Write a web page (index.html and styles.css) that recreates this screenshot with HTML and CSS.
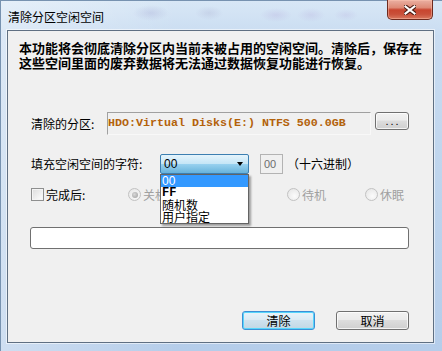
FILE: index.html
```html
<!DOCTYPE html>
<html>
<head>
<meta charset="utf-8">
<title>清除分区空闲空间</title>
<link rel="stylesheet" href="styles.css">
</head>
<body>
<div class="window">
  <div class="titlebar">
    <span class="title">清除分区空闲空间</span>
    <div class="close">
      <svg width="12" height="10" viewBox="0 0 12 10">
        <path d="M1.5 1.5 L10.5 8.5 M10.5 1.5 L1.5 8.5" stroke="#4b1b12" stroke-width="4.2" stroke-linecap="square"/>
        <path d="M1.5 1.5 L10.5 8.5 M10.5 1.5 L1.5 8.5" stroke="#ffffff" stroke-width="2.2" stroke-linecap="square"/>
      </svg>
    </div>
  </div>
  <div class="client">
    <p class="intro">本功能将会彻底清除分区内当前未被占用的空闲空间。清除后，保存在<br>这些空间里面的废弃数据将无法通过数据恢复功能进行恢复。</p>
    <div class="form">
      <div class="row row-part">
        <span class="label label-part">清除的分区:</span>
        <div class="readonly">HDO:Virtual Disks(E:) NTFS 500.0GB</div>
        <div class="btn browse">...</div>
      </div>
      <div class="row row-fill">
        <span class="label label-fill">填充空闲空间的字符:</span>
        <div class="combo">
          <span class="combo-value">00</span>
          <span class="arrow"></span>
          <ul class="dropdown">
            <li class="selected">00</li>
            <li class="latin">FF</li>
            <li>随机数</li>
            <li>用户指定</li>
          </ul>
        </div>
        <div class="hexbox">00</div>
        <span class="hexlabel">（十六进制）</span>
      </div>
      <div class="row row-after">
        <div class="group group-check">
          <span class="checkbox"></span>
          <span class="label">完成后:</span>
        </div>
        <div class="group group-off">
          <span class="radio checked"></span>
          <span class="label disabled">关机</span>
        </div>
        <div class="group group-standby">
          <span class="radio"></span>
          <span class="label disabled">待机</span>
        </div>
        <div class="group">
          <span class="radio"></span>
          <span class="label disabled">休眠</span>
        </div>
      </div>
      <div class="bar"></div>
      <div class="buttons">
        <div class="btn action primary">清除</div>
        <div class="btn action">取消</div>
      </div>
    </div>
  </div>
</div>
</body>
</html>
```

FILE: styles.css
```css
html, body {
  margin: 0;
  padding: 0;
}

body {
  width: 442px;
  height: 351px;
  overflow: hidden;
  font-family: "Noto Sans CJK SC", "Liberation Sans", sans-serif;
  font-size: 12px;
  color: #000;
  background: #b9d1ea;
}

.window {
  width: 442px;
  height: 351px;
  box-sizing: border-box;
  border-left: 1px solid #7792b0;
  border-top: 1px solid #7792b0;
  display: flex;
  flex-direction: column;
  background:
    radial-gradient(ellipse 18px 8px at 150px 12px, rgba(150, 150, 200, 0.25), transparent),
    radial-gradient(ellipse 14px 7px at 208px 12px, rgba(150, 150, 190, 0.2), transparent),
    radial-gradient(ellipse 16px 7px at 275px 14px, rgba(170, 150, 210, 0.22), transparent),
    radial-gradient(ellipse 14px 7px at 310px 14px, rgba(170, 150, 210, 0.2), transparent),
    radial-gradient(ellipse 12px 6px at 345px 14px, rgba(170, 150, 210, 0.18), transparent),
    linear-gradient(90deg, rgba(255, 255, 255, 0.35) 0%, rgba(255, 255, 255, 0) 40%),
    linear-gradient(180deg, #d8e7f6 0%, #c9dcf1 10%, #bcd3ec 60%, #b5cdea 100%);
}

.titlebar {
  height: 29px;
  flex: none;
  display: flex;
  justify-content: space-between;
  align-items: flex-start;
}

.title {
  padding: 8px 0 0 7px;
  line-height: 16px;
  font-size: 12px;
  color: #000;
}

.close {
  width: 46px;
  height: 20px;
  margin-top: -1px;
  margin-right: 9px;
  box-sizing: border-box;
  border: 1px solid #6e2a1e;
  border-top: none;
  border-radius: 0 0 5px 5px;
  background: linear-gradient(180deg, #eab0a2 0%, #de8a76 40%, #c8452f 52%, #c9503a 75%, #d9785f 100%);
  box-shadow: inset 0 0 0 1px rgba(255, 200, 180, 0.45);
  display: flex;
  align-items: center;
  justify-content: center;
}

.client {
  margin-left: 6px;
  width: 427px;
  height: 313px;
  flex: none;
  box-sizing: border-box;
  border: 1px solid #5f6f82;
  box-shadow: 0 0 0 1px rgba(255, 255, 255, 0.55);
  background: #f0f0f0;
  padding: 0 24px 0 11px;
  display: flex;
  flex-direction: column;
}

.intro {
  margin: 0;
  padding-top: 9px;
  font-size: 13px;
  font-weight: bold;
  line-height: 15px;
  white-space: nowrap;
  color: #000;
}

.form {
  padding-left: 12px;
  display: flex;
  flex-direction: column;
}

.row {
  display: flex;
  align-items: flex-start;
}

.label {
  white-space: nowrap;
}

.row-part {
  margin-top: 42px;
  height: 23px;
}

.label-part {
  width: 76px;
  line-height: 23px;
}

.readonly {
  width: 264px;
  height: 23px;
  box-sizing: border-box;
  border: 1px solid;
  border-color: #a0a0a0 #f8f8f8 #f8f8f8 #a0a0a0;
  background: #f0f0f0;
  padding-left: 0px;
  font-family: "Liberation Mono", monospace;
  font-weight: bold;
  font-size: 11.67px;
  line-height: 21px;
  color: #b3620a;
  white-space: nowrap;
  overflow: hidden;
}

.btn {
  box-sizing: border-box;
  border: 1px solid #707070;
  border-radius: 3px;
  background: linear-gradient(180deg, #f2f2f2 0%, #ebebeb 45%, #dddddd 50%, #cfcfcf 100%);
  box-shadow: inset 0 0 0 1px rgba(255, 255, 255, 0.75);
  text-align: center;
}

.browse {
  margin-left: 4px;
  width: 34px;
  height: 18px;
  font-family: "Liberation Sans", sans-serif;
  font-size: 11px;
  line-height: 16px;
  letter-spacing: 2px;
  padding-left: 2px;
}

.row-fill {
  margin-top: 19px;
  height: 20px;
}

.label-fill {
  width: 129px;
  line-height: 19px;
}

.combo {
  position: relative;
  z-index: 2;
  width: 89px;
  height: 20px;
  box-sizing: border-box;
  border: 1px solid #3c7fb1;
  border-radius: 2px;
  background: linear-gradient(180deg, #e5f4fc 0%, #c4e5f6 50%, #98d1ef 51%, #68b3db 100%);
  display: flex;
  align-items: center;
}

.combo-value {
  margin-left: 3px;
  font-family: "Liberation Sans", sans-serif;
  font-size: 12px;
  line-height: 18px;
  flex: 1;
}

.arrow {
  width: 0;
  height: 0;
  margin-right: 5px;
  border-left: 3.5px solid transparent;
  border-right: 3.5px solid transparent;
  border-top: 4px solid #000;
}

.dropdown {
  position: absolute;
  left: -1px;
  top: 19px;
  width: 89px;
  margin: 0;
  padding: 0;
  list-style: none;
  box-sizing: border-box;
  border: 1px solid #646464;
  background: #fff;
  box-shadow: 2px 2px 2px rgba(0, 0, 0, 0.35);
}

.dropdown li {
  height: 12px;
  line-height: 12px;
  padding-left: 1px;
  font-size: 12px;
  white-space: nowrap;
}

.dropdown li.selected {
  background: #3399ff;
  color: #fff;
  font-family: "Liberation Sans", sans-serif;
  height: 12px;
}

.dropdown li.latin {
  font-family: "Liberation Mono", monospace;
  font-weight: bold;
}

.hexbox {
  margin-left: 11px;
  width: 23px;
  height: 20px;
  box-sizing: border-box;
  border: 1px solid #b3b3b3;
  background: #f0f0f0;
  color: #6d6d6d;
  font-family: "Liberation Sans", sans-serif;
  font-size: 11px;
  line-height: 18px;
  padding-left: 3px;
}

.hexlabel {
  margin-left: 4px;
  line-height: 19px;
  white-space: nowrap;
}

.row-after {
  margin-top: 14px;
  height: 13px;
  align-items: center;
}

.group {
  display: flex;
  align-items: center;
  gap: 2px;
}

.group .label {
  line-height: 13px;
}

.group-check {
  width: 97px;
}

.group-off {
  width: 159px;
}

.group-standby {
  width: 78px;
}

.checkbox {
  width: 13px;
  height: 13px;
  box-sizing: border-box;
  border: 1px solid #8e8f8f;
  background: linear-gradient(135deg, #dcdcdc 0%, #f4f4f4 70%, #ffffff 100%);
  box-shadow: inset 0 0 0 1px #f4f4f4;
}

.radio {
  width: 13px;
  height: 13px;
  box-sizing: border-box;
  border: 1px solid #c2c2c2;
  border-radius: 50%;
  background: radial-gradient(circle at 60% 65%, #fbfbfb 0%, #e8e8e8 80%);
  position: relative;
}

.radio.checked::after {
  content: "";
  position: absolute;
  left: 2.5px;
  top: 2.5px;
  width: 6px;
  height: 6px;
  border-radius: 50%;
  background: radial-gradient(circle at 40% 40%, #d8d8d8 0%, #9c9c9c 100%);
}

.label.disabled {
  color: #a0a0a0;
}

.bar {
  margin-top: 26px;
  margin-left: -1px;
  width: 379px;
  height: 22px;
  box-sizing: border-box;
  border: 1px solid #707070;
  border-radius: 3px;
  background: #fff;
}

.buttons {
  margin-top: 62px;
  display: flex;
  justify-content: flex-end;
  gap: 21px;
}

.action {
  width: 73px;
  height: 19px;
  line-height: 17px;
  font-size: 12px;
}

.primary {
  border-color: #3c8fd6;
  background: linear-gradient(180deg, #eaf4fa 0%, #dcebf4 45%, #cfe2ee 50%, #c2d7e4 100%);
  box-shadow: inset 0 0 0 1px #58d6fb;
}
```
